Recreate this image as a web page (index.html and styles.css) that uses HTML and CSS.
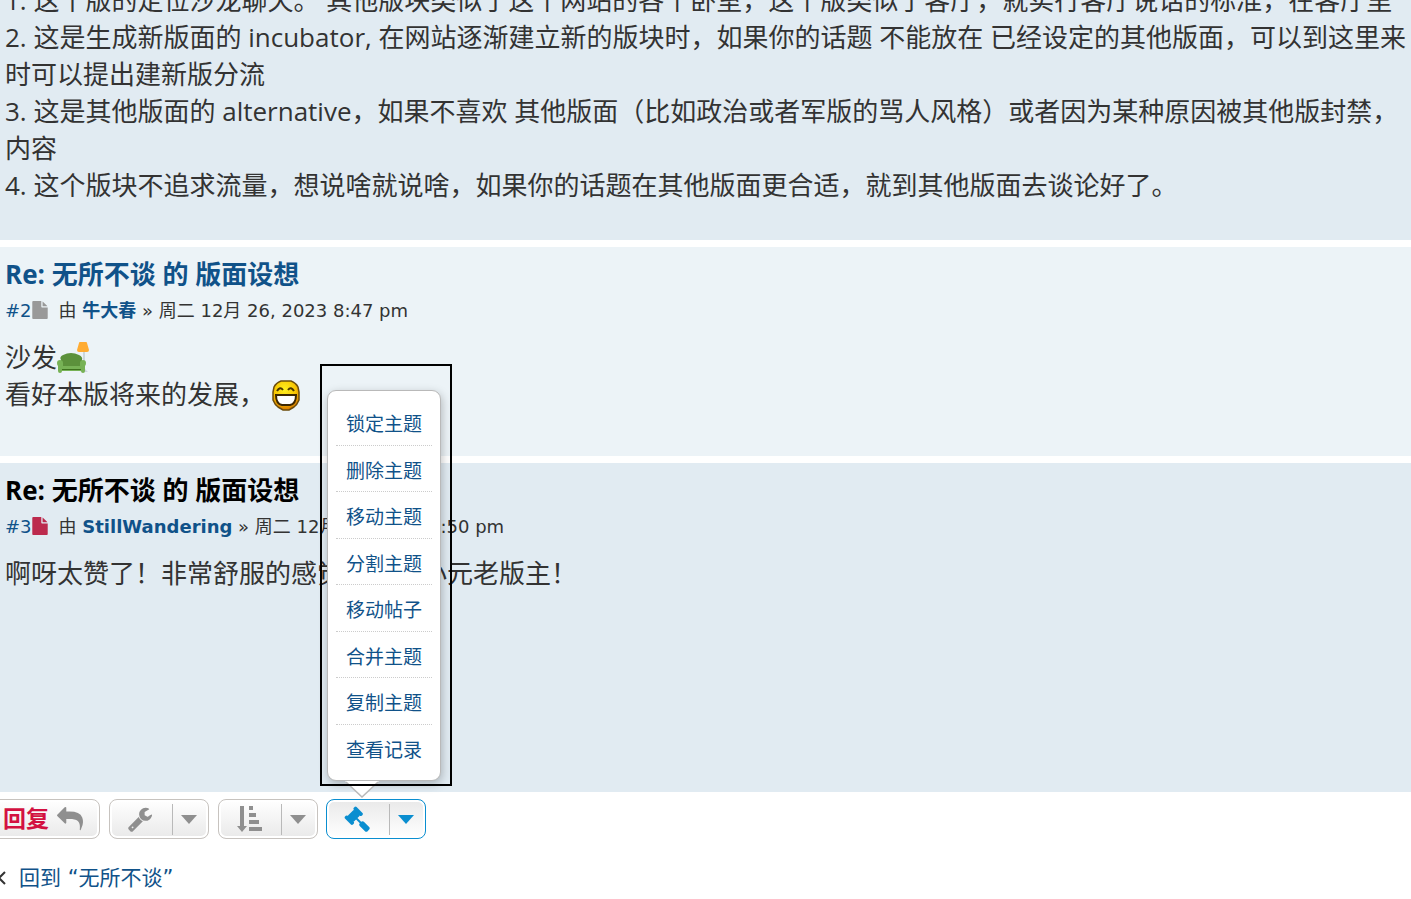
FILE: index.html
```html
<!DOCTYPE html>
<html lang="zh-CN">

<head>
    <meta charset="utf-8">
    <meta name="viewport" content="width=device-width, initial-scale=1">
    <title>无所不谈 的 版面设想</title>
    <link rel="stylesheet" href="styles.css">
</head>

<body>

    <div class="post bg1 first">
        <div class="content">
            1. 这个版的定位沙龙聊天。 其他版块类似于这个网站的各个卧室，这个版类似于客厅，就实行客厅说话的标准，在客厅里<br>
            2. 这是生成新版面的 incubator, 在网站逐渐建立新的版块时，如果你的话题 不能放在 已经设定的其他版面，可以到这里来<br>
            时可以提出建新版分流<br>
            3. 这是其他版面的 alternative，如果不喜欢 其他版面（比如政治或者军版的骂人风格）或者因为某种原因被其他版封禁，<br>
            内容<br>
            4. 这个版块不追求流量，想说啥就说啥，如果你的话题在其他版面更合适，就到其他版面去谈论好了。
        </div>
    </div>

    <div class="post bg2">
        <h3><a href="#p2">Re: 无所不谈 的 版面设想</a></h3>
        <p class="author">
            <a href="#p2">#2<svg class="icon-file" viewBox="0 0 1536 1792"><path d="M1024 512v-472q22 14 36 28l408 408q14 14 28 36h-472zM896 544q0 40 28 68t68 28h544v1056q0 40-28 68t-68 28h-1344q-40 0-68-28t-28-68v-1600q0-40 28-68t68-28h800v544z"/></svg></a>
            <span>由 <a href="#u2" class="username">牛大春</a> » 周二 12月 26, 2023 8:47 pm</span>
        </p>
        <div class="content">
            沙发<svg class="emoji" viewBox="0 0 32 32" role="img" aria-label="沙发和灯">
                <path fill="#ccd6dd" d="M26 9h2v18l3 3h-8l3-3z"/>
                <path fill="#ffac33" d="M22 1q0-1 1-1h6q1 0 1 1l2 7q0 2-2 2h-8q-2 0-2-2z"/>
                <path fill="#5c913b" d="M4 18q-2-3 2-5 8-4 16 0 4 2 3 5v6H4z"/>
                <path fill="#77b255" d="M0 21a3 3 0 0 1 6 0v3h17v-3a3 3 0 0 1 6 0q0 2-1 3v5q0 2-2 2t-2-2H5q0 2-2 2t-2-2v-5q-1-1-1-3z"/>
                <path fill="#3e721d" d="M5 27h19v1H5z"/>
            </svg><br>
            看好本版将来的发展， <svg class="smiley" viewBox="0 0 28 31" role="img" aria-label="大笑">
                <defs>
                    <radialGradient id="face" cx="45%" cy="30%" r="70%">
                        <stop offset="0" stop-color="#fff020"/>
                        <stop offset=".6" stop-color="#f8c400"/>
                        <stop offset="1" stop-color="#d87800"/>
                    </radialGradient>
                </defs>
                <path fill="url(#face)" stroke="#6b4c0c" stroke-width="1.5" d="M9 1h10q5 2 7 6l1 5v8q-2 5-5 7l-5 3h-6l-5-3q-3-2-5-7v-8l1-5q2-4 7-6z"/>
                <path fill="none" stroke="#4a3500" stroke-width="2" d="M5 11q3-5 6-1M16 10q3-4 6 1"/>
                <path fill="#fff" stroke="#3d2700" stroke-width="2" d="M4 15h20q0 9-6 10H10q-6-1-6-10z"/>
            </svg>
        </div>
    </div>

    <div class="post bg1 last">
        <h3 class="current"><a href="#p3">Re: 无所不谈 的 版面设想</a></h3>
        <p class="author">
            <a href="#p3">#3<svg class="icon-file unread" viewBox="0 0 1536 1792"><path d="M1024 512v-472q22 14 36 28l408 408q14 14 28 36h-472zM896 544q0 40 28 68t68 28h544v1056q0 40-28 68t-68 28h-1344q-40 0-68-28t-28-68v-1600q0-40 28-68t68-28h800v544z"/></svg></a>
            <span>由 <a href="#u3" class="username">StillWandering</a> » 周二 12月 26, 2023 8:50 pm</span>
        </p>
        <div class="content">啊呀太赞了！非常舒服的感觉，恭喜小元老版主！</div>
    </div>

    <div class="action-bar">
        <a href="#reply" class="button reply">
            <span>回复</span>
            <svg class="icon" viewBox="0 0 1792 1792"><path transform="translate(1792 0) scale(-1 1)" d="M1792 640q0 26-19 45l-512 512q-19 19-45 19t-45-19-19-45v-256h-224q-98 0-175.500 6t-154 21.500-133 42.500-105.500 69.500-80 101-48.500 138.500-17.500 181q0 55 5 123 0 6 2.500 23.500t2.500 26.500q0 15-8.500 25t-23.500 10q-16 0-28-17-7-9-13-22t-13.500-30-10.500-24q-127-285-127-451 0-199 53-333 162-403 875-403h224v-256q0-26 19-45t45-19 45 19l512 512q19 19 19 45z"/></svg>
        </a>

        <button type="button" class="button tool" aria-label="主题工具">
            <span class="tool-icon"><svg class="icon" viewBox="0 0 1792 1792"><path d="M448 1472q0-26-19-45t-45-19-45 19-19 45 19 45 45 19 45-19 19-45zm644-420l-682 682q-37 37-90 37-52 0-91-37l-106-108q-38-36-38-90 0-53 38-91l681-681q39 98 114.500 173.500t173.500 114.500zm634-435q0 39-23 106-47 134-164.500 217.500t-258.500 83.500q-185 0-316.500-131.500t-131.500-316.500 131.500-316.500 316.500-131.500q58 0 121.500 16.500t107.500 46.500q16 11 16 28t-16 28l-293 169v224l193 107q5-3 79-48.500t135.500-81 70.500-35.500q15 0 23.500 10t8.500 25z"/></svg></span>
            <span class="caret"></span>
        </button>

        <button type="button" class="button tool" aria-label="显示和排序">
            <span class="tool-icon"><svg class="icon" viewBox="0 0 26 26"><path d="M4 0h4v20h3l-5 6-5-6h3zM13 0h4v4h-4zM13 7h7v4h-7zM13 14h10v4H13zM13 21h13v4H13z"/></svg></span>
            <span class="caret"></span>
        </button>

        <div class="mod-tools">
            <button type="button" class="button tool active" aria-label="快速管理">
                <span class="tool-icon"><svg class="icon" viewBox="0 0 1792 1792"><path d="M1771 1536q0 53-37 90l-107 108q-39 37-91 37-53 0-90-37l-363-364q-38-36-38-90 0-53 43-96l-256-256-126 126q-14 14-34 14t-34-14q2 2 12.500 12t12.500 13 10 11.500 10 13.500 6 13.500 5.500 16.500 1.500 18q0 38-28 68-3 3-16.500 18t-19 20.500-18.500 16.500-22 15.500-22 9-26 4.500q-40 0-68-28l-408-408q-28-28-28-68 0-13 4.500-26t9-22 15.500-22 16.500-18.500 20.500-19 18-16.500q30-28 68-28 10 0 18 1.500t16.500 5.500 13.500 6 13.500 10 11.500 10 13 12.500 12 12.500q-14-14-14-34t14-34l348-348q14-14 34-14t34 14q-2-2-12.500-12t-12.500-13-10-11.500-10-13.500-6-13.500-5.500-16.500-1.500-18q0-38 28-68 3-3 16.500-18t19-20.500 18.500-16.500 22-15.500 22-9 26-4.500q40 0 68 28l408 408q28 28 28 68 0 13-4.500 26t-9 22-15.500 22-16.500 18.500-20.500 19-18 16.500q-30 28-68 28-10 0-18-1.500t-16.500-5.500-13.500-6-13.500-10-11.500-10-13-12.500-12-12.500q14 14 14 34t-14 34l-126 126 256 256q43-43 96-43 52 0 91 37l363 363q37 39 37 91z"/></svg></span>
                <span class="caret"></span>
            </button>
            <div class="dropdown">
                <ul class="menu">
                    <li><a href="#lock">锁定主题</a></li>
                    <li><a href="#delete">删除主题</a></li>
                    <li><a href="#move">移动主题</a></li>
                    <li><a href="#split">分割主题</a></li>
                    <li><a href="#moveposts">移动帖子</a></li>
                    <li><a href="#merge">合并主题</a></li>
                    <li><a href="#copy">复制主题</a></li>
                    <li><a href="#logs">查看记录</a></li>
                </ul>
                <svg class="pointer" viewBox="0 0 34 17"><path fill="#fff" d="M0 0h34L17 16z"/><path fill="none" stroke="#b9b9b9" stroke-width="1.500" d="M1 1l16 15L33 1"/></svg>
            </div>
        </div>
    </div>

    <p class="jumpbox-return">
        <a href="#forum"><svg class="icon-back" viewBox="0 0 10 14"><path d="M9 1L3 7l6 6"/></svg><span>回到 “无所不谈”</span></a>
    </p>

</body>

</html>
```
FILE: styles.css
```css
body {
    margin: 0;
    overflow: hidden;
    background-color: #fff;
    color: #333;
    font-family: "DejaVu Sans", "Noto Sans CJK SC", sans-serif;
}

a {
    color: #105289;
    text-decoration: none;
}

.post {
    box-sizing: border-box;
    margin-bottom: 7px;
    padding: 9px 5px 43px;
    overflow: hidden;
    white-space: nowrap;
}

.bg1 {
    background-color: #e1ebf2;
}

.bg2 {
    background-color: #ecf3f7;
}

/* scrolled partly out of view */
.first {
    margin-top: -18px;
    padding: 0 5px 36px;
}

.last {
    min-height: 329px;
}

h3 {
    margin: 0;
    font: bold 26px/37px "Open Sans", "Noto Sans CJK SC", sans-serif;
}

.current a {
    color: #000;
}

.author {
    display: flex;
    gap: 11px;
    margin: 4px 0 14px;
    font-size: 18px;
    line-height: 28px;
}

.username {
    font-weight: bold;
}

.icon-file {
    width: 16px;
    height: 18px;
    vertical-align: -2px;
    fill: #999;
}

.icon-file.unread {
    fill: #bc2a4d;
}

.content {
    font: 26px/37px "Open Sans", "Noto Sans CJK SC", sans-serif;
}

.emoji,
.smiley {
    width: 32px;
    height: 32px;
    vertical-align: -7px;
}

.smiley {
    width: 28px;
    height: 31px;
}

.action-bar {
    display: flex;
    gap: 9px;
    margin-left: -16px;
}

.button {
    display: flex;
    align-items: center;
    box-sizing: border-box;
    height: 40px;
    border: 1px solid #c7c3bf;
    border-radius: 8px;
    background: linear-gradient(#fff, #e9e9e9);
    box-shadow: inset 0 0 0 2px #fff;
    color: #8f8f8f;
    cursor: pointer;
}

.reply {
    gap: 8px;
    width: 116px;
    padding-left: 18px;
    color: #d31141;
    font: bold 23px/34px "Noto Sans CJK SC", sans-serif;
}

.reply span {
    padding-bottom: 4px;
}

.reply .icon {
    fill: #8f8f8f;
}

.tool {
    width: 100px;
    padding: 0;
}

.tool-icon {
    display: flex;
    align-items: center;
    justify-content: center;
    width: 62px;
    height: 31px;
    border-right: 1px solid #b9b9b9;
}

.icon {
    width: 26px;
    height: 26px;
    fill: currentColor;
}

.tool .icon {
    margin-right: 2px;
}

.caret {
    margin-left: 8px;
    border: 8px solid transparent;
    border-top: 9px solid currentColor;
    border-bottom: 0;
}

.active {
    border-color: #0a8ed0;
    background: linear-gradient(#e9e9e9, #fff);
    color: #0a8ed0;
}

.mod-tools {
    position: relative;
    margin-left: -1px;
}

.dropdown {
    position: absolute;
    left: -6px;
    bottom: 53px;
    padding: 26px 11px 5px 7px;
}

.dropdown::after {
    content: "";
    position: absolute;
    inset: 0;
    border: 2px solid #000;
    pointer-events: none;
}

.menu {
    display: grid;
    grid-auto-rows: 1fr;
    height: 372px;
    margin: 0;
    padding: 8px 8px 9px;
    border: 1px solid #b9b9b9;
    border-radius: 9px;
    background-color: #fff;
    box-shadow: 1px 3px 10px rgba(0, 0, 0, 0.25);
    list-style: none;
    font: 19px/45px "Noto Sans CJK SC", sans-serif;
}

.menu li {
    padding: 2px 10px 0;
    border-bottom: 1px dotted #ccc;
    line-height: 43px;
    white-space: nowrap;
}

.menu li:last-child {
    border-bottom: 0;
}

.pointer {
    position: absolute;
    bottom: -12px;
    left: 25px;
    width: 34px;
    height: 17px;
}

.jumpbox-return {
    margin: 24px 0 0 -4px;
    font-size: 21px;
    line-height: 30px;
}

.jumpbox-return a {
    display: flex;
    align-items: center;
    gap: 13px;
}

.icon-back {
    width: 10px;
    height: 14px;
    fill: none;
    stroke: #333;
    stroke-width: 2;
}
```
